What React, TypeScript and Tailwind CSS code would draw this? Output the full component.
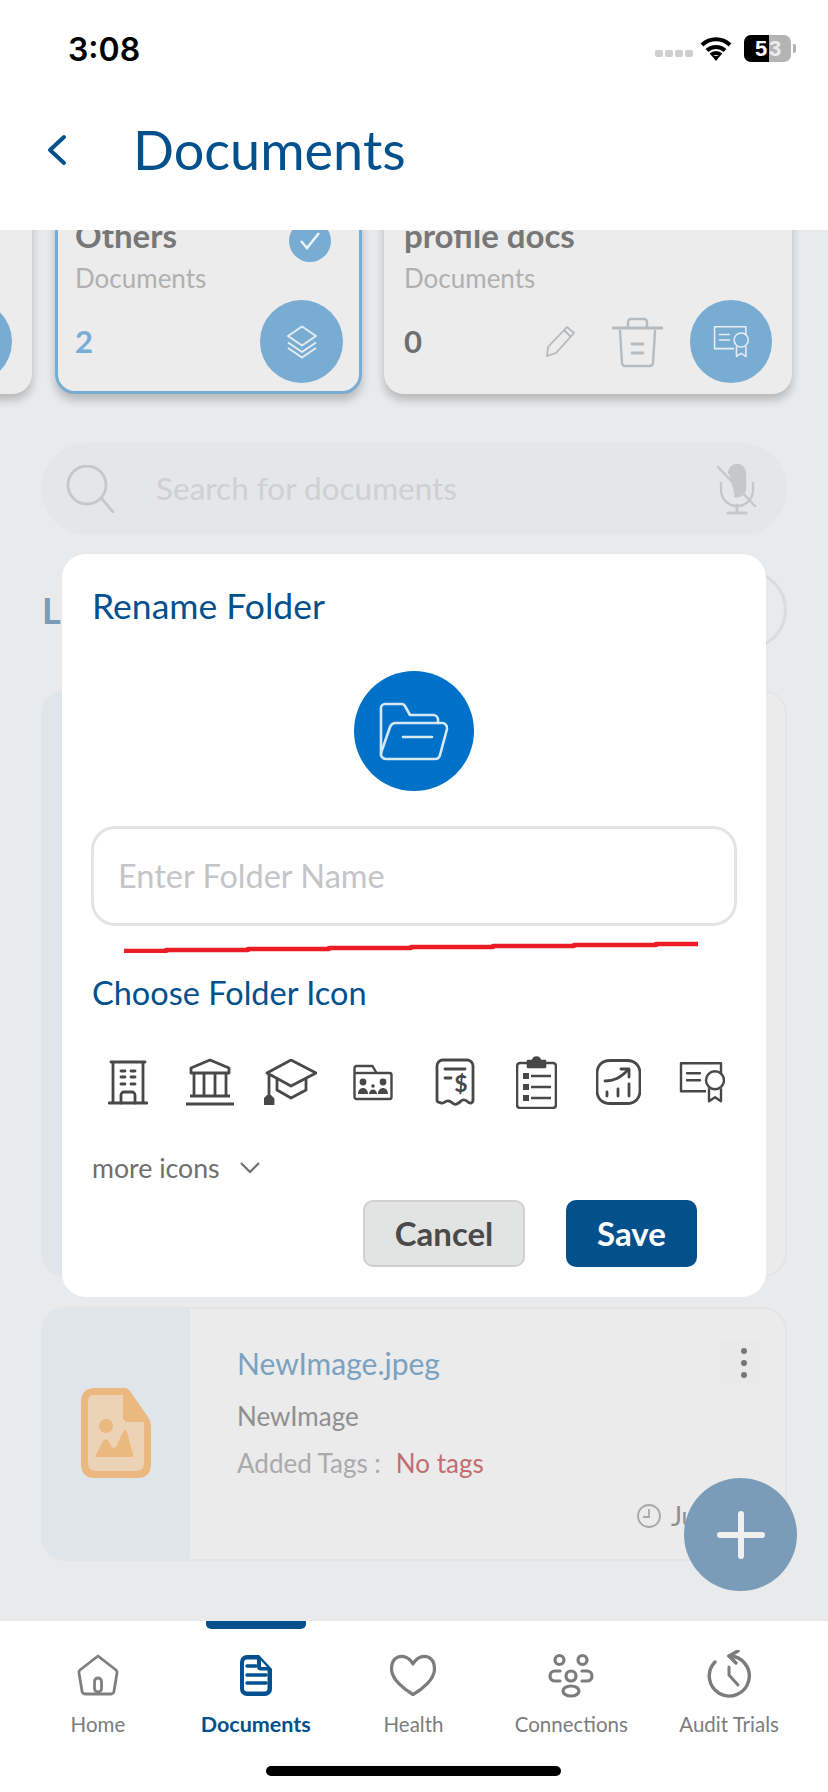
const NAVY = "#02508c";

const Layers = () => (
  <svg width="34" height="34" viewBox="0 0 34 34" fill="none" stroke="#e6edf3" strokeWidth="2" strokeLinejoin="round">
    <path d="M17 1.500 31 11 17 20.500 3 11Z" />
    <path d="M3 17.500 17 27 31 17.500" />
    <path d="M3 23 17 32.500 31 23" />
  </svg>
);

const CertSmall = ({ color, size = 46, sw = 2 }: { color: string; size?: number; sw?: number }) => (
  <svg width={size} height={size * 0.9} viewBox="0 0 46 41" fill="none" stroke={color} strokeWidth={sw}>
    <path d="M27 30H2V2h40v11" strokeLinejoin="round" />
    <path d="M8 12h13M8 19h13" strokeLinecap="round" />
    <circle cx="36" cy="19" r="9" />
    <path d="M30 27v13l6-4 6 4V27" strokeLinejoin="round" />
  </svg>
);

const Building = () => (
  <svg width="40" height="45" viewBox="0 0 40 45" fill="none" stroke="#484848" strokeWidth="2.800" strokeLinecap="round">
    <path d="M3 2h34M5 2v41M35 2v41M1 43h38" />
    <path d="M13 43v-8a3 3 0 0 1 3-3h8a3 3 0 0 1 3 3v8" />
    <path d="M13 11h4M23 11h4M13 17h4M23 17h4M13 24h4M23 24h4" />
  </svg>
);

const Bank = () => (
  <svg width="48" height="48" viewBox="0 0 48 48" fill="none" stroke="#484848" strokeWidth="2.800" strokeLinejoin="round">
    <path d="M24 2 5 10v5h38v-5Z" />
    <path d="M8 15v22M18 15v22M29 15v22M40 15v22" />
    <path d="M4 38h40" />
    <path d="M0 46h48" strokeWidth="3" />
  </svg>
);

const GradCap = () => (
  <svg width="53" height="46" viewBox="0 0 53 46" fill="none" stroke="#484848" strokeWidth="2.800" strokeLinejoin="round">
    <path d="M27 1 52 14 27 27 3 14Z" />
    <path d="M13 20v11l14 8 15-8V20" />
    <path d="M5 15v20" />
    <path d="M1 46v-6l4-4 4 4v6Z" fill="#484848" />
  </svg>
);

const PeopleFolder = () => (
  <svg width="40" height="37" viewBox="0 0 40 37" fill="none" stroke="#484848" strokeWidth="2.400" strokeLinejoin="round">
    <path d="M1.500 8V4a2 2 0 0 1 2-2h16l4 7h13a2 2 0 0 1 2 2v22a2 2 0 0 1-2 2h-33a2 2 0 0 1-2-2Z" />
    <path d="M2 9h21" />
    <g fill="#484848" stroke="none">
      <circle cx="10" cy="18" r="3.400" />
      <circle cx="30" cy="18" r="3.400" />
      <circle cx="20" cy="22" r="1.800" />
      <path d="M5 30c0-8 10-8 10 0ZM25 30c0-8 10-8 10 0ZM16 30c0-6 8-6 8 0Z" />
    </g>
  </svg>
);

const Receipt = () => (
  <svg width="40" height="48" viewBox="0 0 40 48" fill="none" stroke="#484848" strokeWidth="2.800" strokeLinecap="round" strokeLinejoin="round">
    <path d="M2 42V8a6 6 0 0 1 6-6h24a6 6 0 0 1 6 6v34c0 3-3 4-5 2s-5-3-7-1-5 4-7 3-4-4-7-3-4 3-6 2-4 0-4-3Z" />
    <path d="M10 11h20M10 20h6" />
    <text x="26" y="34" textAnchor="middle" fontSize="23" fontWeight="700" fill="#484848" stroke="none" fontFamily="Lato, sans-serif">$</text>
  </svg>
);

const Clipboard = () => (
  <svg width="41" height="54" viewBox="0 0 41 54" fill="none" stroke="#484848" strokeWidth="2.600" strokeLinejoin="round">
    <path d="M12 8H4a3 3 0 0 0-3 3v39a3 3 0 0 0 3 3h33a3 3 0 0 0 3-3V11a3 3 0 0 0-3-3h-8" />
    <path d="M12 12V6h5a3.500 3.500 0 0 1 7 0h5v6Z" fill="#484848" />
    <g fill="#484848" stroke="none">
      <rect x="7" y="18" width="6" height="6" />
      <rect x="7" y="29" width="6" height="6" />
      <rect x="7" y="40" width="6" height="6" />
    </g>
    <path d="M15 21h20M15 32h20M15 43h20" />
  </svg>
);

const ChartBox = () => (
  <svg width="45" height="46" viewBox="0 0 45 46" fill="none" stroke="#484848" strokeWidth="2.800" strokeLinecap="round" strokeLinejoin="round">
    <path d="M14 1.500h17c8 0 13 5 13 13v17c0 8-5 13-13 13H14c-8 0-13-5-13-13v-17c0-8 5-13 13-13Z" />
    <path d="M9 22c9 0 15-3 23-11" />
    <path d="M25 10h8v8" />
    <path d="M11 37v-4M22 37v-7M33 37V25" />
  </svg>
);

const FolderOpen = () => (
  <svg width="72" height="59" viewBox="0 0 72 59" fill="none" stroke="#d6e8f6" strokeWidth="2.600" strokeLinejoin="round" strokeLinecap="round">
    <path d="M3 52V6a4 4 0 0 1 4-4h17a4 4 0 0 1 3 2l5 9h23a5 5 0 0 1 5 5v3" />
    <path d="M12 25a6 6 0 0 1 5-4h47a5 5 0 0 1 5 6l-7 26a5 5 0 0 1-5 4H8a5 5 0 0 1-5-6Z" />
    <path d="M25 35h29" />
  </svg>
);

const Pencil = () => (
  <svg width="31" height="33" viewBox="0 0 31 33" fill="none" stroke="#b4b8bc" strokeWidth="1.800" strokeLinejoin="round">
    <path d="M22 2 29 8 11 28 2 31l1-9Z" />
    <path d="M19 5l7 7" />
  </svg>
);

const Trash = () => (
  <svg width="51" height="51" viewBox="0 0 51 51" fill="none" stroke="#b4bcc2" strokeWidth="2.400" strokeLinecap="round" strokeLinejoin="round">
    <path d="M1 11h49" strokeWidth="3" />
    <path d="M16 10V5a3 3 0 0 1 3-3h13a3 3 0 0 1 3 3v5" />
    <path d="M8 14l2 32a3 3 0 0 0 3 3h25a3 3 0 0 0 3-3l2-32" />
    <path d="M20 27h11M20 36h11" strokeWidth="2.800" />
  </svg>
);

const SearchIcon = () => (
  <svg width="49" height="48" viewBox="0 0 49 48" fill="none" stroke="#c5c7c9" strokeWidth="2.800" strokeLinecap="round">
    <circle cx="21" cy="20" r="19" />
    <path d="M36 34 47 47" />
  </svg>
);

const MicOff = () => (
  <svg width="40" height="52" viewBox="0 0 40 52" fill="none" stroke="#c5c7c9" strokeWidth="2.400" strokeLinecap="round">
    <path d="M12 10a8 8 0 0 1 16 0v16a8 8 0 0 1-10 7" fill="#c5c7c9" />
    <path d="M4 20v7a16 16 0 0 0 32 0v-7" />
    <path d="M20 42v7M11 50h18" strokeWidth="3" />
    <path d="M1 4 38 43" />
  </svg>
);

const FileImage = () => (
  <svg width="70" height="90" viewBox="0 0 70 90" fill="none">
    <path d="M14 0h30q3 0 5 3l18 26q3 4 3 9v38q0 14-14 14H14Q0 90 0 76V14Q0 0 14 0Z" fill="#ebb87f" />
    <path d="M13 7h29v22q0 4 4 5h17v41q0 8-8 8H15q-8 0-8-8V13q0-6 6-6Z" fill="#ecd3b5" />
    <ellipse cx="25" cy="38" rx="7" ry="7" fill="#ebb87f" />
    <path d="M14 69 22 53q3-4 6 1l3 5q3 3 5-2l6-13q2-4 4 0l6 22q1 3-2 3H16q-3 0-2-2Z" fill="#ebb87f" />
  </svg>
);

const HomeIcon = () => (
  <svg width="42" height="42" viewBox="0 0 42 42" fill="none" stroke="#7f7f7f" strokeWidth="2.800" strokeLinejoin="round">
    <path d="M21 2 39 16a3 3 0 0 1 1 3l-3 18a3 3 0 0 1-3 3H8a3 3 0 0 1-3-3L2 19a3 3 0 0 1 1-3Z" />
    <rect x="17.500" y="24" width="7" height="14" rx="3.500" />
  </svg>
);

const DocIcon = () => (
  <svg width="32" height="41" viewBox="0 0 32 41">
    <path d="M7 0h12l13 14v20a7 7 0 0 1-7 7H7a7 7 0 0 1-7-7V7a7 7 0 0 1 7-7Z" fill={NAVY} />
    <path d="M7 4.500h10v7a4 4 0 0 0 4 4h6.500v18a3 3 0 0 1-3 3H7a3 3 0 0 1-3-3V7.500a3 3 0 0 1 3-3Z" fill="#fff" />
    <path d="M21 5.500 27 12h-6Z" fill="#fff" />
    <path d="M7 11h9M7 20h19M7 28h19" stroke={NAVY} strokeWidth="3.500" strokeLinecap="round" />
  </svg>
);

const HeartIcon = () => (
  <svg width="46" height="42" viewBox="0 0 46 42" fill="none" stroke="#7c7c7c" strokeWidth="3.200" strokeLinejoin="round">
    <path d="M23 10C19 3 13 1.500 8 3 3 5 1.500 10 1.500 15c0 10 12 20 21.500 25.500C33 35 44.500 25 44.500 15c0-5-1.500-10-6.500-12-5-1.500-11 0-15 7Z" />
  </svg>
);

const PeopleIcon = () => (
  <svg width="46" height="45" viewBox="0 0 46 45" fill="none" stroke="#7c7c7c" strokeWidth="3.200" strokeLinecap="round">
    <circle cx="11.500" cy="7" r="4.500" />
    <circle cx="34.500" cy="7" r="4.500" />
    <circle cx="23" cy="23" r="5" />
    <ellipse cx="23" cy="38" rx="8" ry="5" />
    <path d="M12 18H7a5 5 0 0 0 0 10h5" />
    <path d="M34 18h5a5 5 0 0 1 0 10h-5" />
  </svg>
);

const AuditIcon = () => (
  <svg width="46" height="50" viewBox="0 0 46 50" fill="none" stroke="#7c7c7c" strokeWidth="3.400" strokeLinecap="round" strokeLinejoin="round">
    <path d="M9 12A20 20 0 1 0 23 6" />
    <path d="M32 1 23 6l7 7" />
    <path d="M23 17v8l9 10" strokeWidth="3" />
  </svg>
);

const navItems = [
  { label: "Home", icon: <HomeIcon /> },
  { label: "Documents", icon: <DocIcon />, active: true },
  { label: "Health", icon: <HeartIcon /> },
  { label: "Connections", icon: <PeopleIcon /> },
  { label: "Audit Trials", icon: <AuditIcon /> },
];

export default function App() {
  return (
    <div className="relative flex h-[1792px] w-[828px] flex-col overflow-hidden bg-[#e8eaec] font-[Lato,sans-serif]">
      {/* header */}
      <header className="z-10 h-[230px] shrink-0 bg-white">
        <div className="flex h-[100px] items-start justify-between pl-[68px] pr-[32px] pt-[30px]">
          <span className="font-[Inter,sans-serif] text-[32px] font-semibold leading-[40px] text-black">3:08</span>
          <div className="flex items-center pt-[5px]">
            <div className="mr-[7px] mt-[10px] flex gap-[2px]">
              <span className="h-[7px] w-[8px] rounded-[2px] bg-[#cfcfcf]" />
              <span className="h-[7px] w-[8px] rounded-[2px] bg-[#cfcfcf]" />
              <span className="h-[7px] w-[8px] rounded-[2px] bg-[#cfcfcf]" />
              <span className="h-[7px] w-[8px] rounded-[2px] bg-[#cfcfcf]" />
            </div>
            <svg width="32" height="25" viewBox="0 0 32 25" className="mr-[12px]" fill="none" stroke="#000" strokeWidth="4">
              <path d="M2 9a20 20 0 0 1 28 0M7 14.500a13 13 0 0 1 18 0M11 19a7 7 0 0 1 10 0" />
              <path d="M12 20 16 25l4-5Z" fill="#000" stroke="none" />
            </svg>
            <div className="flex h-[27px] w-[47px] overflow-hidden rounded-[7px] bg-[#b4b4b4] font-[Liberation_Sans,sans-serif] text-[22px] font-bold leading-[27px]">
              <span className="w-[25px] bg-black pl-[11px] text-white">5</span>
              <span className="text-[#eeeeee]">3</span>
            </div>
            <span className="ml-[2px] h-[9px] w-[3px] rounded-r-[2px] bg-[#b4b4b4]" />
          </div>
        </div>
        <div className="flex items-center pl-[47px] pt-[20px]">
          <svg width="20" height="32" viewBox="0 0 20 32" fill="none" stroke={NAVY} strokeWidth="4" strokeLinecap="round" strokeLinejoin="round">
            <path d="M17 3 3 16l14 13" />
          </svg>
          <h1 className="ml-[66px] text-[54px] leading-[60px] text-[#02508c]">Documents</h1>
        </div>
      </header>

      {/* page behind the dialog */}
      <main className="min-h-0 flex-1 overflow-hidden">
        <div className="ml-[-274px] mt-[-36px] flex gap-[22px]">
          <div className="h-[200px] w-[306px] shrink-0 rounded-[20px] bg-[#ececec] pt-[106px] shadow-[0_6px_10px_rgba(0,0,0,0.22)]">
            <div className="ml-[203px] size-[83px] rounded-full bg-[#78acd3]" />
          </div>
          <div className="ml-[1px] box-border h-[200px] w-[307px] shrink-0 rounded-[20px] border-[3px] border-[#78acd3] bg-[#ececec] pl-[17px] pr-[16px] pt-[21px] shadow-[0_6px_10px_rgba(0,0,0,0.22)]">
            <div className="flex h-[34px] items-start justify-between">
              <span className="text-[33px] font-bold leading-[34px] text-[#777777]">Others</span>
              <span className="mr-[12px] mt-[2px] flex size-[42px] shrink-0 items-center justify-center rounded-full bg-[#78acd3]">
                <svg width="20" height="18" viewBox="0 0 20 18" fill="none" stroke="#eef4f8" strokeWidth="2.400">
                  <path d="M1 9l6 7L19 1" />
                </svg>
              </span>
            </div>
            <div className="mt-[12px] h-[28px] text-[26px] leading-[28px] text-[#b0b0b0]">Documents</div>
            <div className="mt-[8px] flex items-center justify-between">
              <span className="text-[31px] font-bold text-[#78acd3]">2</span>
              <span className="flex size-[83px] items-center justify-center rounded-full bg-[#78acd3]">
                <Layers />
              </span>
            </div>
          </div>
          <div className="box-border h-[200px] w-[408px] shrink-0 rounded-[20px] bg-[#ececec] pl-[20px] pr-[20px] pt-[24px] shadow-[0_6px_10px_rgba(0,0,0,0.22)]">
            <div className="h-[34px] text-[33px] font-bold leading-[34px] text-[#777777]">profile docs</div>
            <div className="mt-[12px] h-[28px] text-[26px] leading-[28px] text-[#b0b0b0]">Documents</div>
            <div className="mt-[8px] flex items-center">
              <span className="text-[31px] font-bold text-[#6e6e6e]">0</span>
              <span className="ml-[123px]"><Pencil /></span>
              <span className="ml-[36px] mt-[2px]"><Trash /></span>
              <span className="ml-[27px] flex size-[83px] items-center justify-center rounded-full bg-[#78acd3]">
                <CertSmall color="#e6edf3" size={36} sw={2} />
              </span>
            </div>
          </div>
        </div>

        <div className="mx-[41px] mt-[49px] flex h-[92px] items-center rounded-full bg-[#e4e6e9] pl-[25px] pr-[30px]">
          <SearchIcon />
          <span className="ml-[41px] flex-1 text-[31.5px] text-[#cfd0d2]">Search for documents</span>
          <MicOff />
        </div>

        <div className="mx-[41px] mt-[35px] flex h-[80px] items-center justify-between">
          <span className="ml-[1px] text-[36px] font-bold text-[#7a9cb8]">L</span>
          <span className="size-[80px] rounded-full border-[3px] border-[#d9dbde]" />
        </div>

        <div className="mx-[41px] mt-[40px] h-[587px] overflow-hidden rounded-[24px] border-2 border-[#e2e4e6] bg-[#ebebeb]">
          <div className="h-full w-[149px] bg-[#dee6ec]" />
        </div>

        <div className="mx-[41px] mt-[30px] flex h-[254px] overflow-hidden rounded-[24px] border-2 border-[#e2e4e6] bg-[#ebebeb]">
          <div className="flex w-[147px] shrink-0 items-center justify-center bg-[#dee6ec] pb-[2px] pr-[2px]">
            <FileImage />
          </div>
          <div className="relative flex-1 pl-[47px] pt-[35px]">
            <div className="text-[30px] leading-[38px] text-[#7aa2c0]">NewImage.jpeg</div>
            <div className="mt-[18px] text-[26px] leading-[32px] text-[#8f8f8f]">NewImage</div>
            <div className="mt-[15px] flex text-[26px] leading-[32px]">
              <span className="text-[#aaaaaa]">Added Tags :</span>
              <span className="ml-[15px] text-[#c26d6f]">No tags</span>
            </div>
            <div className="absolute left-[447px] top-[194px] flex items-center gap-[10px] text-[26px] leading-[26px] text-[#8f8f8f]">
              <svg width="24" height="24" viewBox="0 0 24 24" fill="none" stroke="#a8a8a8" strokeWidth="1.800">
                <circle cx="12" cy="12" r="11" />
                <path d="M12 5v8H6" />
              </svg>
              <span>Jun</span>
            </div>
            <div className="absolute right-[26px] top-[32px] flex h-[43px] w-[38px] flex-col items-center justify-center gap-[6px] bg-[#e9e9e9]">
              <span className="ml-[7px] size-[6px] rounded-full bg-[#757575]" />
              <span className="ml-[7px] size-[6px] rounded-full bg-[#757575]" />
              <span className="ml-[7px] size-[6px] rounded-full bg-[#757575]" />
            </div>
          </div>
        </div>
      </main>

      {/* bottom nav */}
      <nav className="relative z-10 h-[171px] shrink-0 bg-white">
        <span className="absolute left-[206px] top-0 h-[8px] w-[100px] rounded-b-[5px] bg-[#02508c]" />
        <div className="flex pl-[19px] pr-[20px] pt-[28px]">
          {navItems.map((item) => (
            <div key={item.label} className="flex w-[158px] flex-col items-center">
              <div className="flex h-[52px] items-center">{item.icon}</div>
              <span
                className={
                  item.active
                    ? "mt-[9px] text-[21.5px] font-bold leading-[28px] text-[#02508c]"
                    : "mt-[9px] text-[20.5px] leading-[28px] text-[#7c7c7c]"
                }
              >
                {item.label}
              </span>
            </div>
          ))}
        </div>
        <span className="absolute bottom-[16px] left-[266px] h-[10px] w-[295px] rounded-full bg-black" />
      </nav>

      {/* add button */}
      <button className="absolute left-[684px] top-[1478px] z-20 flex size-[113px] items-center justify-center rounded-full bg-[#7a9cb8]">
        <svg width="48" height="48" viewBox="0 0 48 48" stroke="#f0f0f0" strokeWidth="6" strokeLinecap="round">
          <path d="M24 3v42M3 24h42" />
        </svg>
      </button>

      {/* rename dialog */}
      <div className="absolute left-[62px] top-[554px] z-20 box-border flex h-[743px] w-[704px] flex-col rounded-[24px] bg-white px-[30px] pt-[30px]">
        <h2 className="text-[35.5px] leading-[44px] text-[#02508c]">Rename Folder</h2>
        <div className="mt-[43px] flex size-[120px] items-center justify-center self-center rounded-full bg-[#0071c8]">
          <FolderOpen />
        </div>
        <div className="ml-[-1px] mt-[35px] box-border flex h-[100px] w-[646px] items-center rounded-[24px] border-[3px] border-[#e3e4e5] pl-[24px] text-[32.5px] text-[#c4c5c7]">
          Enter Folder Name
        </div>
        <svg width="590" height="12" viewBox="0 0 590 12" className="ml-[29px] mt-[15px]" fill="none" stroke="#ed1c24" strokeWidth="4.500" strokeLinejoin="round">
          <path d="M3 10H45V9H127V8H208V7H290V6H372V5H453V4H535V3H577" />
        </svg>
        <h3 className="mt-[19px] text-[32.5px] leading-[42px] text-[#02508c]">Choose Folder Icon</h3>
        {/* icon gaps are uneven in the picker */}
        <div className="ml-[16px] mt-[41px] flex h-[54px] items-center">
          <Building />
          <span className="ml-[38px]"><Bank /></span>
          <span className="ml-[30px]"><GradCap /></span>
          <span className="ml-[36px]"><PeopleFolder /></span>
          <span className="ml-[42px]"><Receipt /></span>
          <span className="ml-[41px]"><Clipboard /></span>
          <span className="ml-[39px]"><ChartBox /></span>
          <span className="ml-[38px]"><CertSmall color="#484848" size={46} sw={2.4} /></span>
        </div>
        <div className="mt-[42px] flex h-[34px] items-center text-[26.7px] text-[#6f6f6f]">
          more icons
          <svg width="20" height="12" viewBox="0 0 20 12" fill="none" stroke="#6f6f6f" strokeWidth="2.200" className="ml-[20px]">
            <path d="M1 1l9 9 9-9" />
          </svg>
        </div>
        <div className="mt-[15px] flex justify-end gap-[41px] pr-[39px]">
          <button className="box-border h-[67px] w-[162px] rounded-[10px] border-2 border-[#d0d0d0] bg-[#e2e4e3] text-[33px] font-bold text-[#4a4a4a]">
            Cancel
          </button>
          <button className="h-[67px] w-[131px] rounded-[10px] bg-[#02508c] text-[33px] font-bold text-white">
            Save
          </button>
        </div>
      </div>
    </div>
  );
}
